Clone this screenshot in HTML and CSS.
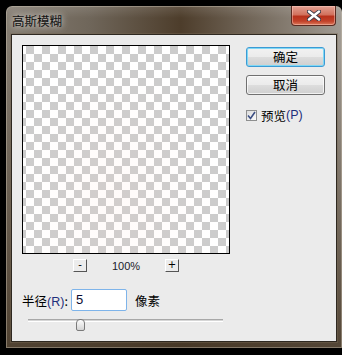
FILE: index.html
```html
<!DOCTYPE html>
<html lang="zh-CN">
<head>
  <meta charset="UTF-8" />
  <title>高斯模糊</title>
  <link rel="stylesheet" href="styles.css">
</head>
<body>

  <div class="window">
    <div class="titlebar">
      <span class="title">高斯模糊</span>
      <span class="close">
        <svg width="14" height="11" viewBox="0 0 14 11">
          <path d="M2 1.5 L12 9.5 M12 1.5 L2 9.5" stroke="#3a3a48" stroke-width="4.2" stroke-linecap="round"/>
          <path d="M2 1.5 L12 9.5 M12 1.5 L2 9.5" stroke="#fff" stroke-width="2.4" stroke-linecap="round"/>
        </svg>
      </span>
    </div>

    <div class="client">
      <div class="top">
        <div class="preview-col">
          <div class="preview"></div>
          <div class="zoom-row">
            <span class="tiny-btn">-</span>
            <span class="zoom-val">100%</span>
            <span class="tiny-btn">+</span>
          </div>
        </div>

        <div class="actions">
          <button class="btn default">确定</button>
          <button class="btn">取消</button>
          <label class="check">
            <span class="box">
              <svg width="9" height="9" viewBox="0 0 9 9">
                <path d="M1 4.5 L3.5 7.5 L8 1" fill="none" stroke="#3c4f84" stroke-width="1.6"/>
              </svg>
            </span>
            预览<span class="latin">(P)</span>
          </label>
        </div>
      </div>

      <div class="radius-row">
        <span class="label">半径<span class="latin">(R)</span>:</span>
        <span class="field">5</span>
        <span class="unit">像素</span>
      </div>

      <div class="slider">
        <div class="track"></div>
        <div class="thumb"></div>
      </div>
    </div>
  </div>

</body>
</html>
```

FILE: styles.css
```css
body {
  margin: 0;
  background-color: #000;
  font-family: 'Liberation Sans', 'Noto Sans CJK SC', sans-serif;
  font-size: 12px;
  color: #000;
}
.window {
  margin: 6px 0 0 6px;
  width: 336px;
  height: 342px;
  border-radius: 6px 6px 0 0;
  display: flex;
  flex-direction: column;
  box-shadow: inset 0 0 0 1px rgba(200, 190, 175, 0.45);
  background:
    linear-gradient(180deg, rgba(255, 255, 255, 0.12) 0, rgba(0, 0, 0, 0) 12px, rgba(0, 0, 0, 0) 40px, rgba(70, 55, 38, 0.85) 100%),
    linear-gradient(90deg, #857d72 0, #6f665a 25%, #4d3d2b 52%, #6d6153 70%, #a19b93 100%);
}
.titlebar {
  height: 28px;
  display: flex;
  justify-content: space-between;
  align-items: flex-start;
}
.title {
  padding: 6px 0 0 6px;
  line-height: 17px;
  font-size: 12.5px;
  font-family: 'Noto Sans CJK SC', sans-serif;
  color: #111;
  text-shadow: 0 0 6px rgba(255, 255, 255, 0.7), 0 0 10px rgba(255, 255, 255, 0.4);
}
.close {
  width: 45px;
  height: 20px;
  margin-right: 6px;
  box-sizing: border-box;
  border: 1px solid #5a2a20;
  border-top: none;
  border-radius: 0 0 4px 4px;
  display: flex;
  align-items: center;
  justify-content: center;
  background: linear-gradient(180deg, #e3a294 0, #d2725e 45%, #b8321c 55%, #c2422a 80%, #dc7a5c 100%);
  box-shadow: inset 0 0 0 1px rgba(255, 210, 200, 0.45);
}
.client {
  margin: 0 5px 6px 5px;
  flex: 1;
  background-color: #ebebeb;
  border: 1px solid #2e2820;
  padding: 10px 0 0 10px;
  box-shadow: 0 0 0 1px rgba(120, 105, 85, 0.4);
}
.top {
  display: flex;
  gap: 16px;
}
.preview {
  width: 206px;
  height: 207px;
  border: 1px solid #000;
  background:
    radial-gradient(ellipse at 45% 75%, rgba(255, 215, 205, 0.12), rgba(255, 215, 205, 0) 65%),
    repeating-conic-gradient(#cccccc 0 25%, #ffffff 0 50%) -5px 0 / 16px 16px;
}
.zoom-row {
  margin-top: 5px;
  display: flex;
  justify-content: center;
  align-items: center;
  height: 13px;
}
.tiny-btn {
  width: 14px;
  height: 13px;
  box-sizing: border-box;
  border: 1px solid;
  border-color: #fff #555 #555 #fff;
  background-color: #ececec;
  font-size: 10px;
  line-height: 10px;
  text-align: center;
  font-family: 'DejaVu Sans', sans-serif;
}
.zoom-val {
  width: 78px;
  text-align: center;
  font-size: 11px;
  color: #1a1a2a;
}
.actions {
  width: 79px;
  padding-top: 2px;
  display: flex;
  flex-direction: column;
}
.btn {
  height: 20px;
  padding: 0;
  border: 1px solid #707070;
  border-radius: 3px;
  background: linear-gradient(180deg, #f2f2f2 0, #ebebeb 50%, #dddddd 51%, #cfcfcf 100%);
  box-shadow: inset 0 0 0 1px rgba(255, 255, 255, 0.7);
  font-family: 'Noto Sans CJK SC', sans-serif;
  font-size: 12.5px;
  line-height: 16px;
  color: #000;
}
.btn + .btn {
  margin-top: 8px;
}
.btn.default {
  border-color: #3c9ad4;
  box-shadow: inset 0 0 0 1px #7fd8f5;
}
.check {
  margin-top: 13px;
  display: flex;
  align-items: center;
  height: 14px;
  font-family: 'Noto Sans CJK SC', sans-serif;
  font-size: 12.5px;
}
.box {
  width: 11px;
  height: 11px;
  box-sizing: border-box;
  border: 1px solid #8e8f8f;
  margin-right: 4px;
  background: linear-gradient(135deg, #dcdcdc, #fbfbfb);
  display: flex;
  align-items: center;
  justify-content: center;
}
.latin {
  font-family: 'Liberation Sans', sans-serif;
  color: #1e2f7c;
}
.radius-row {
  margin-top: 17px;
  display: flex;
  align-items: center;
  height: 22px;
  font-family: 'Noto Sans CJK SC', sans-serif;
  font-size: 12.5px;
}
.label {
  width: 49px;
}
.field {
  width: 56px;
  height: 22px;
  box-sizing: border-box;
  border: 1px solid #7eb4ea;
  border-radius: 2px;
  background-color: #fff;
  padding-left: 4px;
  font-family: 'Liberation Sans', sans-serif;
  font-size: 13px;
  line-height: 20px;
  color: #0a0a30;
}
.unit {
  margin-left: 8px;
}
.slider {
  position: relative;
  margin: 8px 0 0 6px;
  width: 195px;
  height: 12px;
}
.track {
  margin-top: 5px;
  height: 1px;
  border-top: 1px solid #a8a8a8;
  border-bottom: 1px solid #fff;
  background-color: #d6d6d6;
}
.thumb {
  position: absolute;
  left: 48px;
  top: 0;
  width: 9px;
  height: 12px;
  box-sizing: border-box;
  border: 1px solid #7a7a7a;
  border-radius: 4px 4px 2px 2px;
  background: linear-gradient(180deg, #fdfdfd, #d4d4d4);
}
```
